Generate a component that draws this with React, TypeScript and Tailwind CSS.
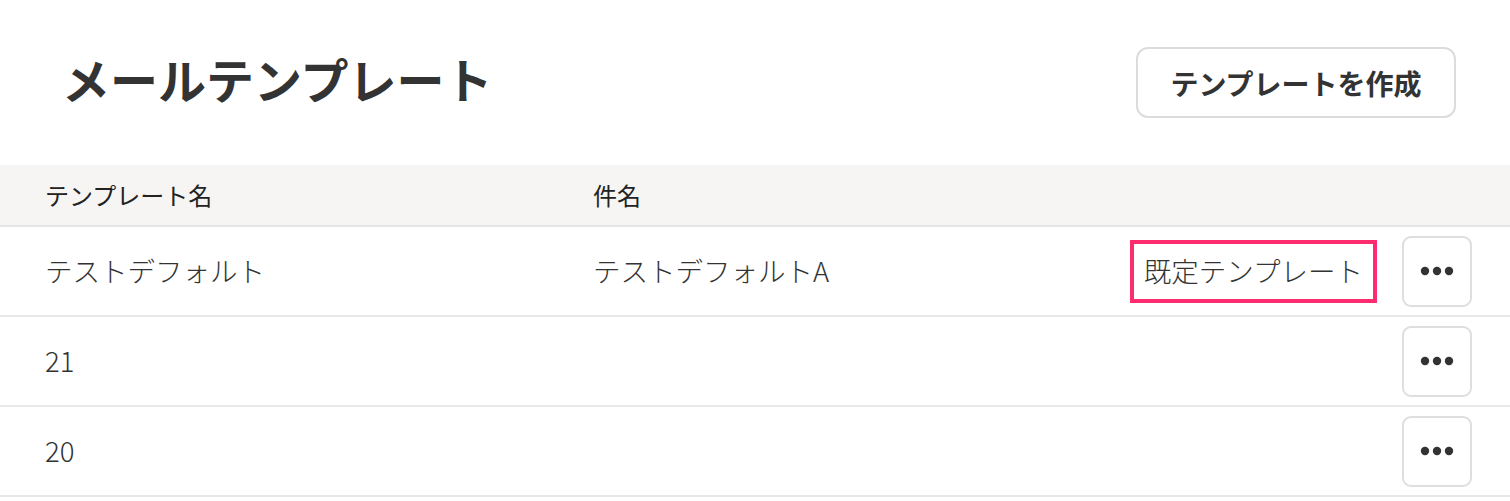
import React from "react";

const Dots = () => (
  <svg width="34" height="10" viewBox="0 0 34 10" aria-hidden="true">
    <circle cx="5" cy="5" r="4.2" fill="#333" />
    <circle cx="17" cy="5" r="4.2" fill="#333" />
    <circle cx="29" cy="5" r="4.2" fill="#333" />
  </svg>
);

const MoreButton = () => (
  <button className="w-[70px] h-[71px] rounded-[9px] border-2 border-[#dedede] bg-white flex items-center justify-center">
    <Dots />
  </button>
);

const rows: { name: string; subject: string; isDefault: boolean }[] = [
  { name: "テストデフォルト", subject: "テストデフォルトA", isDefault: true },
  { name: "21", subject: "", isDefault: false },
  { name: "20", subject: "", isDefault: false },
];

export default function App() {
  return (
    <div
      className="w-[1510px] h-[501px] bg-white text-[#333] overflow-hidden"
      style={{ fontFamily: '"Noto Sans CJK JP", "Noto Sans", sans-serif' }}
    >
      <div className="h-[165px] flex items-center justify-between pl-[62px] pr-[54px]">
        <h1 className="text-[48px] font-bold leading-none tracking-[0px] text-[#333] mb-[10px]">
          メールテンプレート
        </h1>
        <button className="w-[320px] h-[71px] rounded-[12px] border-2 border-[#dcdcdc] bg-white text-[28px] font-bold text-[#333] flex items-center justify-center leading-none">
          テンプレートを作成
        </button>
      </div>

      <div className="w-full">
        <div className="h-[62px] bg-[#f6f5f3] border-b-2 border-[#e6e5e3] grid grid-cols-[548px_1fr] items-center pl-[45px] text-[24px] text-[#222] leading-none">
          <div>テンプレート名</div>
          <div>件名</div>
        </div>
        {rows.map((r) => (
          <div
            key={r.name}
            className="h-[90px] border-b-2 border-[#e8e8e8] grid grid-cols-[548px_1fr_auto] items-center pl-[45px] pr-[38px] text-[27.5px] font-light leading-none"
          >
            <div>{r.name}</div>
            <div>{r.subject}</div>
            <div className="flex items-center gap-[25px]">
              {r.isDefault && (
                <div className="h-[63px] border-4 border-[#fd2c6f] flex items-center px-[10px] text-[27.5px]">
                  既定テンプレート
                </div>
              )}
              <MoreButton />
            </div>
          </div>
        ))}
      </div>
    </div>
  );
}
